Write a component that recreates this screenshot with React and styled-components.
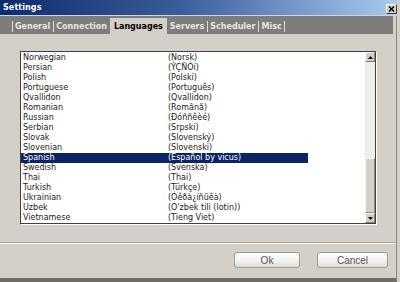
import React from "react";
import styled, { createGlobalStyle } from "styled-components";

const GlobalStyle = createGlobalStyle`
  html, body {
    margin: 0;
    padding: 0;
    background: #d4d0c8;
  }
`;

const Window = styled.div`
  width: 400px;
  height: 282px;
  background: #d4d0c8;
  overflow: hidden;
`;

const Dialog = styled.div`
  width: 396px;
  height: 278px;
  display: flex;
  flex-direction: column;
  border-right: 1px solid #8a8883;
  border-bottom: 4px solid #6f6d69;
  font-family: "DejaVu Sans", Verdana, sans-serif;
`;

const TitleBar = styled.div`
  height: 15px;
  flex: none;
  display: flex;
  align-items: center;
  justify-content: space-between;
  padding: 0 0 0 3px;
  background: linear-gradient(to right, #0f2a6e, #3a5c9a 45%, #a9cbef);
  border-bottom: 1px solid #c9d6e6;
  margin-right: -1px;
`;

const Title = styled.span`
  color: #ffffff;
  font-weight: bold;
  font-size: 8px;
  letter-spacing: 0.1px;
`;

const CloseButton = styled.div`
  width: 9px;
  height: 8px;
  margin-top: 2px;
  display: flex;
  align-items: center;
  justify-content: center;
  background: #d4d0c8;
  border: 1px solid;
  border-color: #ffffff #404040 #404040 #ffffff;
`;

const TabBar = styled.div`
  height: 18px;
  flex: none;
  display: flex;
  align-items: flex-end;
  padding-left: 12px;
  margin-right: 3px;
  background: #7d7d7b;
`;

const Tab = styled.div`
  height: 16px;
  display: flex;
  align-items: center;
  padding: 0 ${p => (p.$active ? 4 : 3)}px;
  font-size: 8px;
  font-weight: bold;
  color: ${p => (p.$active ? "#000000" : "#e6e6e4")};
  background: ${p => (p.$active ? "#d4d0c8" : "transparent")};
  position: relative;
  ${p =>
    p.$sep &&
    `
    &::before {
      content: "";
      position: absolute;
      left: 0;
      top: 3px;
      bottom: 2px;
      width: 1px;
      background: #dedcd8;
    }
  `}
  ${p =>
    p.$last &&
    `
    &::after {
      content: "";
      position: absolute;
      right: 0;
      top: 3px;
      bottom: 2px;
      width: 1px;
      background: #dedcd8;
    }
  `}
`;

const Body = styled.div`
  flex: 1;
  padding: 17px 20px 18px 20px;
  display: flex;
`;

const ListBox = styled.div`
  flex: 1;
  display: flex;
  background: #ffffff;
  border: 1px solid #404040;
  box-shadow: 1px 1px 0 #ffffff;
  overflow: hidden;
`;

const Rows = styled.div`
  flex: 1;
  padding-top: 1px;
  overflow: hidden;
`;

const Row = styled.div`
  width: 287px;
  height: 10px;
  display: flex;
  align-items: center;
  font-size: 8px;
  line-height: 10px;
  color: ${p => (p.$selected ? "#ffffff" : "#1a1a1a")};
  background: ${p => (p.$selected ? "#0b2468" : "transparent")};
`;

const NameCell = styled.span`
  width: 145px;
  padding-left: 2px;
  white-space: nowrap;
`;

const NativeCell = styled.span`
  white-space: nowrap;
`;

const ScrollBar = styled.div`
  width: 10px;
  flex: none;
  display: flex;
  flex-direction: column;
  background: #eeede9;
`;

const ArrowButton = styled.div`
  height: 8px;
  flex: none;
  display: flex;
  align-items: center;
  justify-content: center;
  background: #d4d0c8;
  border: 1px solid;
  border-color: #ffffff #808080 #808080 #ffffff;
`;

const Track = styled.div`
  flex: 1;
  display: flex;
  flex-direction: column;
`;

const Thumb = styled.div`
  height: 53px;
  margin-top: auto;
  background: #d4d0c8;
  border: 1px solid;
  border-color: #f4f3f0 #8f8d88 #8f8d88 #f4f3f0;
`;

const Separator = styled.div`
  height: 0;
  flex: none;
  border-top: 1px solid #a8a59f;
  border-bottom: 1px solid #f4f3f0;
`;

const Footer = styled.div`
  height: 32px;
  flex: none;
  display: flex;
  align-items: center;
  justify-content: flex-end;
  gap: 17px;
  padding: 0 8px 2px 0;
`;

const Button = styled.div`
  width: ${p => p.$w}px;
  height: 14px;
  display: flex;
  align-items: center;
  justify-content: center;
  border: 1px solid #9d9b96;
  border-radius: 3px;
  background: linear-gradient(to bottom, #ffffff, #f2f2f0 55%, #dcdcd8);
  font-family: "Liberation Sans", Arial, sans-serif;
  font-size: 10px;
  color: #555555;
`;

const Arrow = ({ down }) => (
  <svg width="5" height="3" viewBox="0 0 5 3">
    <polygon points={down ? "0,0 5,0 2.5,3" : "0,3 5,3 2.5,0"} fill="#000" />
  </svg>
);

const languages = [
  ["Norwegian", "(Norsk)"],
  ["Persian", "(ÝÇÑÓí)"],
  ["Polish", "(Polski)"],
  ["Portuguese", "(Português)"],
  ["Qvallidon", "(Qvallidon)"],
  ["Romanian", "(Românã)"],
  ["Russian", "(Ðóññêèé)"],
  ["Serbian", "(Srpski)"],
  ["Slovak", "(Slovenský)"],
  ["Slovenian", "(Slovenski)"],
  ["Spanish", "(Español by vicus)"],
  ["Swedish", "(Svenska)"],
  ["Thai", "(Thai)"],
  ["Turkish", "(Türkçe)"],
  ["Ukrainian", "(Óêðà¿íñüêà)"],
  ["Uzbek", "(O'zbek tili (lotin))"],
  ["Vietnamese", "(Tieng Viet)"],
];

const tabs = ["General", "Connection", "Languages", "Servers", "Scheduler", "Misc"];

const App = () => {
  const active = "Languages";
  const selected = "Spanish";

  return (
    <>
      <GlobalStyle />
      <Window>
        <Dialog>
          <TitleBar>
            <Title>Settings</Title>
            <CloseButton>
              <svg width="7" height="6" viewBox="0 0 7 6">
                <path d="M1 0.5 L6 5.5 M6 0.5 L1 5.5" stroke="#000" strokeWidth="1.4" />
              </svg>
            </CloseButton>
          </TitleBar>
          <TabBar>
            {tabs.map((t, i) => {
              const isActive = t === active;
              const prevActive = i > 0 && tabs[i - 1] === active;
              return (
                <Tab
                  key={t}
                  $active={isActive}
                  $sep={!isActive && !prevActive}
                  $last={i === tabs.length - 1}
                >
                  {t}
                </Tab>
              );
            })}
          </TabBar>
          <Body>
            <ListBox>
              <Rows>
                {languages.map(([name, native]) => (
                  <Row key={name} $selected={name === selected}>
                    <NameCell>{name}</NameCell>
                    <NativeCell>{native}</NativeCell>
                  </Row>
                ))}
              </Rows>
              <ScrollBar>
                <ArrowButton>
                  <Arrow />
                </ArrowButton>
                <Track>
                  <Thumb />
                </Track>
                <ArrowButton>
                  <Arrow down />
                </ArrowButton>
              </ScrollBar>
            </ListBox>
          </Body>
          <Separator />
          <Footer>
            <Button $w={64}>Ok</Button>
            <Button $w={69}>Cancel</Button>
          </Footer>
        </Dialog>
      </Window>
    </>
  );
};

export default App;
